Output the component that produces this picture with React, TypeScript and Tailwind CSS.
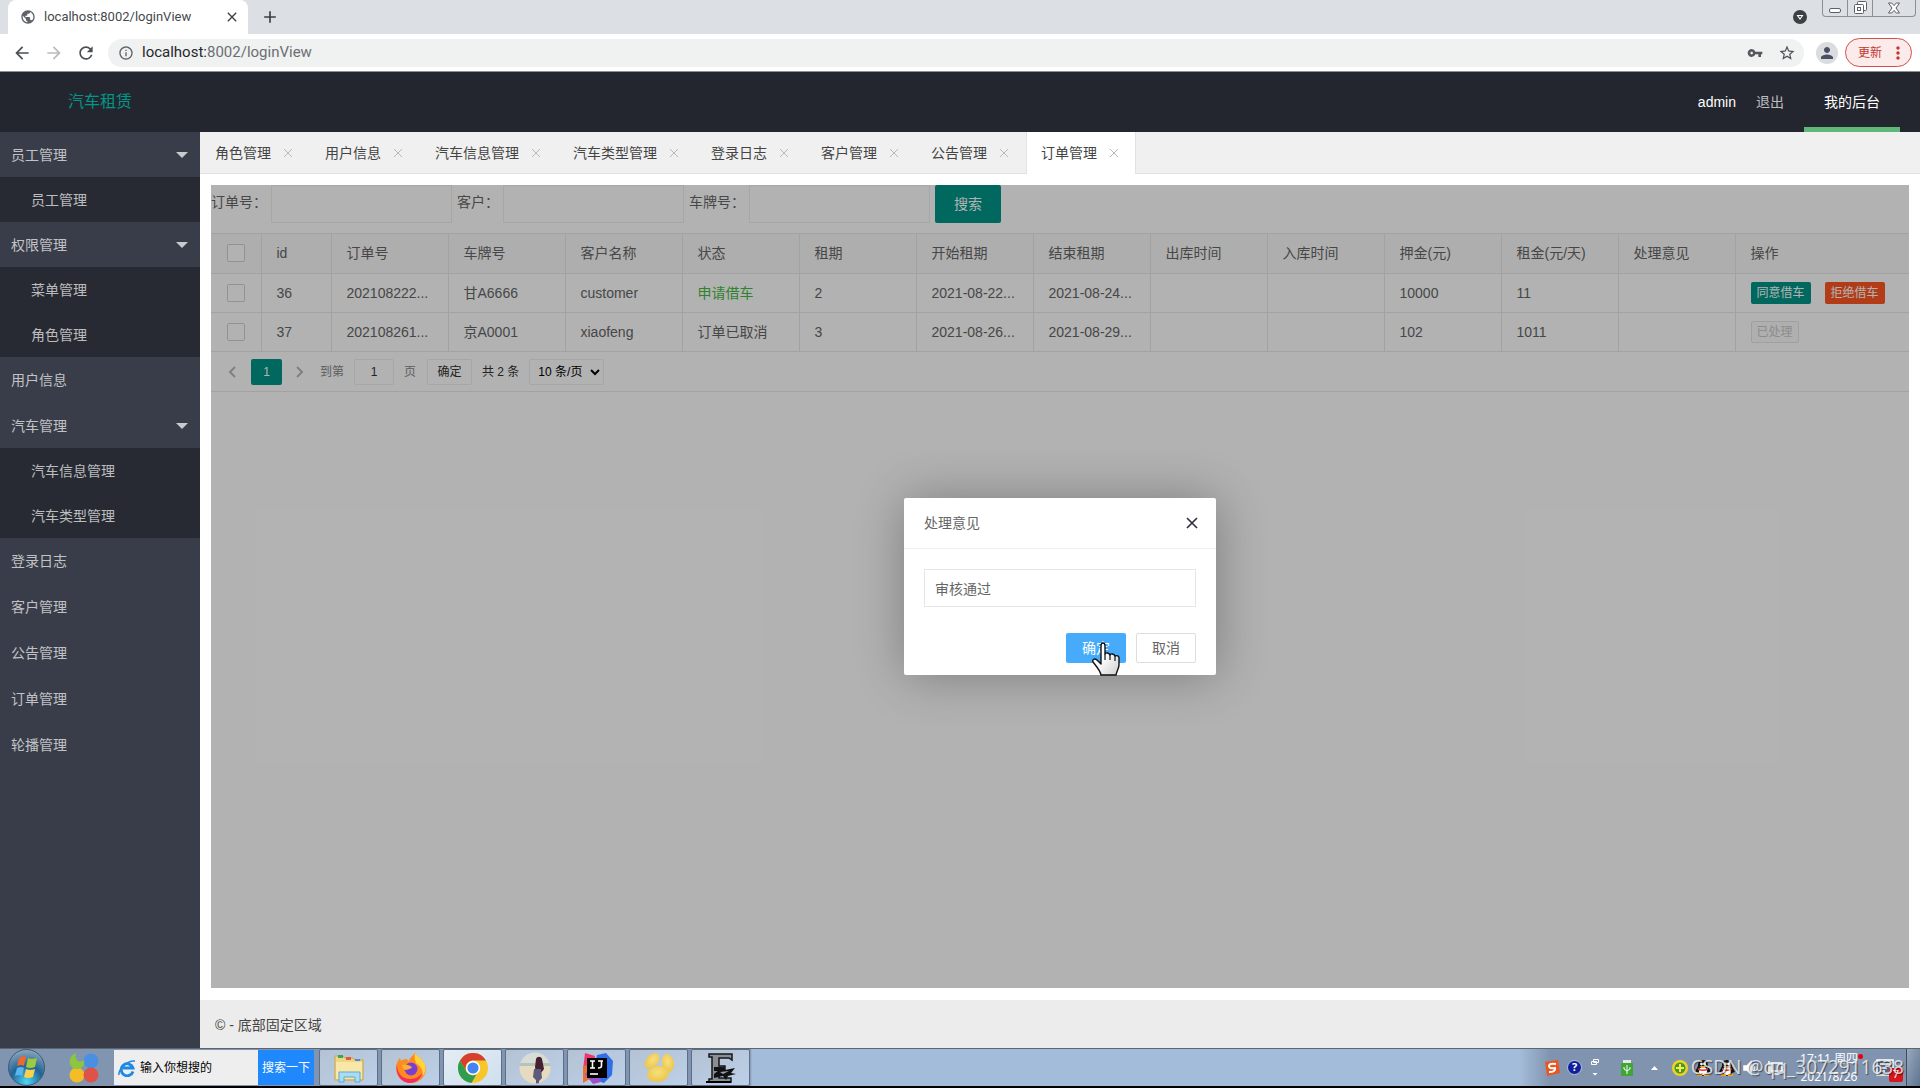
import React, { useState } from "react";
import {
  MdArrowBack,
  MdArrowForward,
  MdRefresh,
  MdInfoOutline,
  MdVpnKey,
  MdStarBorder,
  MdPerson,
  MdMoreVert,
  MdPublic,
  MdClose,
  MdAdd,
} from "react-icons/md";

const menu = [
  { label: "员工管理", children: ["员工管理"] },
  { label: "权限管理", children: ["菜单管理", "角色管理"] },
  { label: "用户信息" },
  { label: "汽车管理", children: ["汽车信息管理", "汽车类型管理"] },
  { label: "登录日志" },
  { label: "客户管理" },
  { label: "公告管理" },
  { label: "订单管理" },
  { label: "轮播管理" },
];

const tabs = [
  "角色管理",
  "用户信息",
  "汽车信息管理",
  "汽车类型管理",
  "登录日志",
  "客户管理",
  "公告管理",
  "订单管理",
];

const columns = [
  "id",
  "订单号",
  "车牌号",
  "客户名称",
  "状态",
  "租期",
  "开始租期",
  "结束租期",
  "出库时间",
  "入库时间",
  "押金(元)",
  "租金(元/天)",
  "处理意见",
  "操作",
];

const orders = [
  {
    id: "36",
    cells: ["202108222...", "甘A6666", "customer", "申请借车", "2", "2021-08-22...", "2021-08-24...", "", "", "10000", "11", ""],
    pending: true,
  },
  {
    id: "37",
    cells: ["202108261...", "京A0001", "xiaofeng", "订单已取消", "3", "2021-08-26...", "2021-08-29...", "", "", "102", "1011", ""],
    pending: false,
  },
];

const filters = [
  { id: "orderNo", label: "订单号：", width: "w-[60px]" },
  { id: "customer", label: "客户：", width: "w-[46px]" },
  { id: "plate", label: "车牌号：", width: "w-[60px]" },
];

const checkbox =
  "block w-[18px] h-[18px] appearance-none rounded-xs border border-[#d2d2d2] bg-white";

const BrowserBar = () => (
  <div className="font-['Noto_Sans','Noto_Sans_CJK_SC',sans-serif]">
    <div className="flex h-[34px] bg-[#dcdfe4] pl-2">
      <div className="flex w-[240px] items-center rounded-t-lg bg-white pl-3 pr-2">
        <MdPublic className="h-4 w-4 text-[#5f6368]" />
        <span className="ml-2 flex-1 font-['Roboto',sans-serif] text-[13px] text-[#45494d]">
          localhost:8002/loginView
        </span>
        <button aria-label="关闭标签页">
          <MdClose className="h-4 w-4 text-[#3c4043]" />
        </button>
      </div>
      <button aria-label="新标签页" className="ml-3">
        <MdAdd className="h-5 w-5 text-[#3c4043]" />
      </button>
      <div className="ml-auto flex items-start">
        <svg className="mt-[10px] mr-[15px] h-[14px] w-[14px]" viewBox="0 0 14 14">
          <circle cx="7" cy="7" r="7" fill="#3c4043" />
          <path d="M3.5 5h7L7 10z" fill="#fff" />
          <path d="M5.5 6h3L7 8z" fill="#3c4043" />
        </svg>
        <div className="mr-1 flex h-[17px] rounded-b border border-t-0 border-[#8b8f96] text-[#5b5f68]">
          <button aria-label="最小化" className="flex w-[25px] items-center justify-center border-r border-[#8b8f96]">
            <svg className="h-[14px] w-[14px]" viewBox="0 0 14 14" fill="#fff" stroke="currentColor">
              <rect x="1.5" y="7.5" width="11" height="4" rx="1.5" />
            </svg>
          </button>
          <button aria-label="还原" className="flex w-[25px] items-center justify-center border-r border-[#8b8f96]">
            <svg className="h-[14px] w-[14px]" viewBox="0 0 14 14" fill="#fff" stroke="currentColor">
              <rect x="4.5" y="0.5" width="9" height="9" rx="1" />
              <rect x="1.5" y="3.5" width="9" height="9" rx="1" />
              <rect x="4.5" y="6.5" width="3" height="3" />
            </svg>
          </button>
          <button aria-label="关闭" className="flex w-[42px] items-center justify-center">
            <svg className="h-[14px] w-[14px]" viewBox="0 0 14 14" fill="#fff" stroke="currentColor">
              <path d="M1.5 2h3.2L7 4.6 9.3 2h3.2L9 7l3.5 5H9.3L7 9.4 4.7 12H1.5L5 7z" />
            </svg>
          </button>
        </div>
      </div>
    </div>

    <div className="flex h-[38px] items-center border-b border-[#8c9093] bg-white pl-3 pr-2">
      <button aria-label="后退">
        <MdArrowBack className="h-5 w-5 text-[#4b4f53]" />
      </button>
      <button aria-label="前进" className="ml-3">
        <MdArrowForward className="h-5 w-5 text-[#b9bbbe]" />
      </button>
      <button aria-label="重新加载" className="ml-3">
        <MdRefresh className="h-5 w-5 text-[#4b4f53]" />
      </button>
      <div className="ml-3 flex h-7 flex-1 items-center rounded-full bg-[#f0f1f1] pl-[10px] pr-2">
        <MdInfoOutline className="h-4 w-4 text-[#5f6368]" />
        <span className="ml-2 font-['Roboto',sans-serif] text-[15px] text-[#6b6f73]">
          <span className="text-[#26282b]">localhost:</span>8002/loginView
        </span>
        <MdVpnKey className="ml-auto h-4 w-4 text-[#55595d]" />
        <MdStarBorder className="ml-[15px] h-[18px] w-[18px] text-[#4b4f53]" />
      </div>
      <div className="ml-3 flex h-[22px] w-[22px] items-center justify-center rounded-full bg-[#dadce0]">
        <MdPerson className="h-[18px] w-[18px] text-[#4a5062]" />
      </div>
      <button className="ml-[7px] flex h-[29px] w-[67px] items-center rounded-full border border-[#d0504a] bg-[#fbeceb] pl-3 text-xs text-[#c5352d]">
        更新
        <MdMoreVert className="ml-[6px] h-5 w-5" />
      </button>
    </div>
  </div>
);

const Sidebar = () => (
  <nav className="w-[200px] shrink-0 bg-[#393d49] text-white/70">
    {menu.map((item) => (
      <div key={item.label}>
        <a
          href="#"
          className={`flex items-center justify-between pl-[11px] pr-3 ${
            item.children ? "h-[45px]" : "h-[46px]"
          }`}
        >
          {item.label}
          {item.children && (
            <svg className="h-[6px] w-3" viewBox="0 0 12 6" fill="#c9cacc">
              <path d="M0 0h12L6 6z" />
            </svg>
          )}
        </a>
        {item.children && (
          <div className="bg-[#272a32]">
            {item.children.map((child) => (
              <a key={child} href="#" className="flex h-[45px] items-center pl-[31px]">
                {child}
              </a>
            ))}
          </div>
        )}
      </div>
    ))}
  </nav>
);

const OrderTable = () => (
  <div className="border-b border-t border-[#e8e8e8]">
    <table className="w-full table-fixed border-collapse text-left">
      <colgroup>
        <col className="w-[50px]" />
        <col className="w-[70px]" />
        {columns.slice(1, -1).map((c) => (
          <col key={c} className="w-[117px]" />
        ))}
        <col />
      </colgroup>
      <thead className="bg-[#fafafa]">
        <tr className="h-[39px] border-b border-[#e8e8e8]">
          <th className="border-r border-[#e8e8e8] pl-4">
            <input type="checkbox" aria-label="全选" className={checkbox} />
          </th>
          {columns.map((c) => (
            <th key={c} className="truncate border-r border-[#e8e8e8] px-[15px] font-normal last:border-r-0">
              {c}
            </th>
          ))}
        </tr>
      </thead>
      <tbody>
        {orders.map((order) => (
          <tr key={order.id} className="h-[39px] border-b border-[#e8e8e8]">
            <td className="border-r border-[#e8e8e8] pl-4">
              <input type="checkbox" aria-label={order.id} className={checkbox} />
            </td>
            <td className="border-r border-[#e8e8e8] px-[15px]">{order.id}</td>
            {order.cells.map((cell, i) => (
              <td
                key={i}
                className={`whitespace-nowrap border-r border-[#e8e8e8] px-[15px] ${
                  cell === "申请借车" ? "text-[#45b93f]" : ""
                }`}
              >
                {cell}
              </td>
            ))}
            <td className="px-[15px]">
              {order.pending ? (
                <div className="flex gap-[14px]">
                  <button className="h-[22px] w-[60px] rounded-xs bg-[#009688] text-xs text-white">
                    同意借车
                  </button>
                  <button className="h-[22px] w-[60px] rounded-xs bg-[#ff5722] text-xs text-white">
                    拒绝借车
                  </button>
                </div>
              ) : (
                <button disabled className="block h-[22px] w-12 rounded-xs border border-[#e6e6e6] bg-[#fbfbfb] text-xs text-[#c9c9c9]">
                  已处理
                </button>
              )}
            </td>
          </tr>
        ))}
      </tbody>
    </table>

    <div className="flex h-[39px] items-center pl-3 pt-px text-xs text-[#333333]">
      <button aria-label="上一页" className="mr-[10px] flex w-[18px] justify-center">
        <svg className="h-3 w-2" viewBox="0 0 8 12" fill="none" stroke="#b8b8b8" strokeWidth="2">
          <path d="M7 1L2 6l5 5" />
        </svg>
      </button>
      <button className="h-[26px] w-[31px] rounded-xs bg-[#009688] text-white">1</button>
      <button aria-label="下一页" className="flex w-9 justify-center">
        <svg className="h-3 w-2" viewBox="0 0 8 12" fill="none" stroke="#b8b8b8" strokeWidth="2">
          <path d="M1 1l5 5-5 5" />
        </svg>
      </button>
      <label htmlFor="page" className="ml-[2px] w-[34px] text-[#888888]">到第</label>
      <input
        id="page"
        defaultValue="1"
        className="h-[26px] w-10 rounded-xs border border-[#eeeeee] bg-white text-center"
      />
      <span className="ml-[10px] text-[#888888]">页</span>
      <button className="ml-[11px] h-[26px] w-[45px] rounded-xs border border-[#eeeeee]">
        确定
      </button>
      <span className="ml-[10px]">共 2 条</span>
      <select
        aria-label="每页条数"
        className="ml-[10px] h-[26px] w-[75px] rounded-xs border border-[#eeeeee] bg-white pl-1 text-black"
      >
        <option>10 条/页</option>
      </select>
    </div>
  </div>
);

const Cursor = () => (
  <svg className="pointer-events-none absolute left-[26px] top-[9px] h-[34px] w-7" viewBox="0 0 28 34">
    <defs>
      <linearGradient id="glove" x1="0" y1="0" x2="1" y2="1">
        <stop offset="0.4" stopColor="#fff" />
        <stop offset="1" stopColor="#cfcfcf" />
      </linearGradient>
    </defs>
    <path
      d="M9 4c0-4 4-4 4 0v8c1-2 4-1 5 1 1-2 4-1 5 1 2-1 4 0 4 2v7c0 3-2 5-3 10H9C8 28 4 24 1 20c-1-3 2-4 4-2l4 4z"
      fill="url(#glove)"
      stroke="#111"
      strokeWidth="1.4"
      strokeLinejoin="round"
    />
    <path d="M13 12v6M18 13v5M23 14v5" stroke="#111" strokeWidth="1.2" fill="none" />
  </svg>
);

const OpinionDialog = () => {
  const [opinion, setOpinion] = useState("审核通过");

  return (
    <div className="absolute inset-0 flex items-center justify-center bg-black/30">
      <div
        role="dialog"
        aria-label="处理意见"
        className="w-[312px] rounded-xs bg-white shadow-[1px_1px_50px_rgba(0,0,0,0.3)]"
      >
        <div className="flex h-[51px] items-center justify-between border-b border-[#eeeeee] pl-5 pr-[17px]">
          <h2>处理意见</h2>
          <button aria-label="关闭">
            <svg className="h-[14px] w-[14px]" viewBox="0 0 14 14" stroke="#2e2d3c" strokeWidth="1.6">
              <path d="M2 2l10 10M12 2L2 12" />
            </svg>
          </button>
        </div>
        <div className="px-5 pt-5">
          <input
            aria-label="处理意见"
            value={opinion}
            onChange={(e) => setOpinion(e.target.value)}
            className="block h-[38px] w-full border border-[#e6e6e6] px-[10px] outline-none"
          />
        </div>
        <div className="flex justify-end gap-[10px] px-5 pb-3 pt-[26px]">
          <div className="relative">
            <button className="block h-[30px] w-[60px] rounded-xs bg-[#45abfa] text-white">
              确定
            </button>
            <Cursor />
          </div>
          <button className="h-[30px] w-[60px] rounded-xs border border-[#dedede]">取消</button>
        </div>
      </div>
    </div>
  );
};

const FolderIcon = () => (
  <svg className="h-8 w-8" viewBox="0 0 32 32">
    <path d="M2 4h8l2 2h8l2 2h8v20H2z" fill="#efd686" stroke="#c9a74a" />
    <path d="M3 10h26v17H3z" fill="#f8e7a6" />
    <path d="M5 3h5v3H5z" fill="#35a853" />
    <path d="M13 5h5v3h-5z" fill="#e3573c" />
    <path d="M22 7h5v2h-5z" fill="#4a90d9" />
    <path d="M6 30V20h21v10h-5v-5H11v5z" fill="#a9dcf2" stroke="#5ba9d0" />
  </svg>
);

const FirefoxIcon = () => (
  <svg className="h-8 w-8" viewBox="0 0 32 32">
    <path d="M20 1c1 3 8 6 10 12 3 9-4 18-14 18C7 31 1 24 1 16c0-4 2-8 4-10l1 3c1-1 3-2 5-2 2 0 1 2 3 2 0-3 4-5 6-8z" fill="#ff8a1f" />
    <path d="M20 1c1 3 8 6 10 12 1 4 0 8-2 11 0-7-3-10-7-13-1-3-2-6-1-10z" fill="#ffd43a" />
    <path d="M2 12c0 10 6 15 13 15 6 0 10-3 12-6-1 6-6 10-12 10C6 31 0 22 2 12z" fill="#f2305a" />
    <circle cx="16" cy="17" r="6.5" fill="#7a3fd0" />
    <path d="M7 13c4-1 7 0 10 2-1 2-4 2-6 3-2 0-4-2-4-5z" fill="#ffb02e" />
  </svg>
);

const ChromeIcon = () => (
  <svg className="h-[30px] w-[30px]" viewBox="0 0 30 30">
    <circle cx="15" cy="15" r="15" fill="#f6c62d" />
    <path d="M2 7.5A15 15 0 0 1 28 7.5H15a7.5 7.5 0 0 0-6.5 11.2z" fill="#d5402f" />
    <path d="M2 7.5l6.5 11.2a7.5 7.5 0 0 0 10 2.5L13.5 30A15 15 0 0 1 2 7.5z" fill="#2d9d50" />
    <circle cx="15" cy="15" r="7.2" fill="#fff" />
    <circle cx="15" cy="15" r="5.6" fill="#4484ee" />
  </svg>
);

const PhotoIcon = () => (
  <svg className="h-8 w-8" viewBox="0 0 32 32">
    <defs>
      <clipPath id="round">
        <circle cx="16" cy="16" r="15.5" />
      </clipPath>
    </defs>
    <g clipPath="url(#round)">
      <path d="M0 0h32v12H0z" fill="#d8dcd6" />
      <path d="M0 11h32v3H0z" fill="#b3c4bd" />
      <path d="M0 14h32v18H0z" fill="#e6dac0" />
      <path d="M17 7c1-3 5-3 6 0l2 10-3 4h-5l-1-6z" fill="#45202e" />
      <path d="M15 17h7l1 9-3 3v3h-3v-4l-3-3z" fill="#5b5a78" />
    </g>
  </svg>
);

const IdeaIcon = () => (
  <svg className="h-8 w-8" viewBox="0 0 32 32">
    <path d="M4 1l10 3-2 12L2 18z" fill="#f0356f" />
    <path d="M2 14l10-2 2 12-12 7z" fill="#e8713a" />
    <path d="M16 3l9-2 7 8-1 14-8 8-12-4z" fill="#2f6fe8" />
    <path d="M4 22l12-10 4 18-8 2z" fill="#9b52c8" />
    <rect x="6" y="6" width="20" height="20" fill="#000" />
    <path d="M9 9h5M11.5 9v7M9 16h5M17 9h5M20.5 9v5q0 2-3.5 2" stroke="#fff" strokeWidth="1.6" fill="none" />
    <path d="M9 22h8" stroke="#fff" strokeWidth="1.6" />
  </svg>
);

const NavicatIcon = () => (
  <svg className="h-8 w-8" viewBox="0 0 32 32">
    <defs>
      <radialGradient id="bean" cx="50%" cy="40%" r="70%">
        <stop offset="0" stopColor="#f8e07a" />
        <stop offset="1" stopColor="#e8c048" />
      </radialGradient>
    </defs>
    <g fill="url(#bean)">
      <ellipse cx="9" cy="9" rx="6" ry="9" transform="rotate(40 9 9)" />
      <ellipse cx="25" cy="11" rx="6" ry="9" transform="rotate(-12 25 11)" />
      <ellipse cx="15" cy="22" rx="11" ry="8" transform="rotate(-8 15 22)" />
    </g>
  </svg>
);

const RecorderIcon = () => (
  <svg className="h-8 w-8" viewBox="0 0 32 32">
    <path d="M4 2h23v6l-3-2H14v8h6v4h-6v8h12v4H4v-3h3V5H4z" fill="#8a8f95" stroke="#15171a" strokeWidth="1.5" />
    <path d="M9 15h8v4H9zM9 22l10-8 1 4 10-2-4 5 5 1-8 2-2 4-3-4-9 2z" fill="#101214" />
    <path d="M15 20l9-1-6 3z" fill="#9da2a8" />
    <path d="M1 30h25" stroke="#000" strokeWidth="2" />
  </svg>
);

const taskbarApps = [
  { name: "资源管理器", icon: <FolderIcon /> },
  { name: "Firefox", icon: <FirefoxIcon /> },
  { name: "Chrome", icon: <ChromeIcon /> },
  { name: "照片", icon: <PhotoIcon /> },
  { name: "IntelliJ IDEA", icon: <IdeaIcon /> },
  { name: "Navicat", icon: <NavicatIcon /> },
  { name: "录屏", icon: <RecorderIcon /> },
];

const Penguin = () => (
  <svg className="h-4 w-4" viewBox="0 0 16 16">
    <path d="M8 0c4 0 5 3 5 6l3 6-3 1-5 3-5-3-3-1 3-6c0-3 1-6 5-6z" fill="#111" />
    <ellipse cx="8" cy="11" rx="4" ry="4" fill="#fff" />
    <circle cx="6.5" cy="4" r="1.4" fill="#fff" />
    <circle cx="9.5" cy="4" r="1.4" fill="#fff" />
    <path d="M4 6h8l-4 2z" fill="#f5a623" />
    <path d="M3 8q5 3 10 0v2q-5 2-10 0z" fill="#e3342f" />
    <path d="M2 14h5v2H2zM9 14h5v2H9z" fill="#f5a623" />
  </svg>
);

const Taskbar = () => (
  <div className="relative flex h-10 border-b-2 border-t border-b-black border-t-[#5b6673] bg-[linear-gradient(to_right,#8295b0_0,#8295b0_750px,#a3bcd9_752px,#a3bcd9_calc(100%-400px),#8194af_calc(100%-370px),#8194af_100%)] font-['Noto_Sans','Noto_Sans_CJK_SC',sans-serif]">
    <div className="flex w-[114px] items-center pl-2">
      <svg className="h-[37px] w-[37px]" viewBox="0 0 37 37">
        <defs>
          <radialGradient id="orb" cx="50%" cy="90%" r="90%">
            <stop offset="0" stopColor="#4fd8f5" />
            <stop offset="0.5" stopColor="#1f6396" />
            <stop offset="1" stopColor="#8fa9bd" />
          </radialGradient>
        </defs>
        <circle cx="18.5" cy="18.5" r="18" fill="url(#orb)" stroke="#3e5873" />
        <path d="M11 9q4-3 7-1l-2 9q-3-2-7 0z" fill="#f0672e" />
        <path d="M20 9q4 2 9 0l-2 9q-5 2-9 0z" fill="#9ccb3c" />
        <path d="M9 19q4-2 7 0l-2 8q-3-2-7 0z" fill="#5bb5ee" />
        <path d="M18 20q4 2 9 0l-2 8q-5 2-9 0z" fill="#fcd048" />
      </svg>
      <svg className="ml-6 h-[30px] w-[30px]" viewBox="0 0 30 30">
        <circle cx="22" cy="8" r="7.5" fill="#4a90e2" />
        <circle cx="8" cy="22" r="7.5" fill="#f4bd27" />
        <circle cx="22" cy="22" r="7.5" fill="#df5248" />
        <path d="M7 0C-2 3-1 16 8 16c6 0 9-6 6-9-3 4-9 0-7-7z" fill="#8cc63f" />
      </svg>
    </div>

    <div className="flex py-px">
      <div className="flex w-36 items-center bg-[#eeeeee] pl-1">
        <svg className="h-[18px] w-[18px]" viewBox="0 0 18 18" fill="none" stroke="#1e88e5">
          <path d="M15 12.5A6 6 0 1 1 15 9H5" strokeWidth="2.8" />
          <path d="M1 16C0 11 9 1 17 2" strokeWidth="1.5" />
        </svg>
        <input
          aria-label="搜索"
          defaultValue="输入你想搜的"
          className="ml-1 w-[110px] text-xs text-black outline-none"
        />
      </div>
      <button className="w-14 bg-[#1e88fc] text-xs text-white">搜索一下</button>
    </div>

    <div className="ml-[5px] flex gap-[3px]">
      {taskbarApps.map((app) => (
        <button
          key={app.name}
          aria-label={app.name}
          className={`flex w-[59px] items-center justify-center rounded-xs border border-[#5d6f88] ${
            app.name === "Chrome"
              ? "bg-linear-to-br from-[#e4edf5] to-[#cfdfec]"
              : "bg-linear-to-br from-[#b4c2d3] to-[#bcd0e8]"
          }`}
        >
          {app.icon}
        </button>
      ))}
    </div>

    <div className="ml-auto flex items-center text-xs text-white">
      <svg className="h-4 w-4" viewBox="0 0 16 16">
        <path d="M1 2l13-2 2 13-13 3z" fill="#ea5520" />
        <path d="M12 4Q5 3 5 6t6 2q1 4-6 4" stroke="#fff" strokeWidth="2" fill="none" />
      </svg>
      <span className="ml-[7px] flex h-[15px] w-[15px] items-center justify-center rounded-full border border-[#b9c3e4] bg-[#10209a] text-[11px] font-bold">
        ?
      </span>
      <svg className="ml-[9px] h-5 w-2" viewBox="0 0 8 20" fill="none" stroke="#fff">
        <path d="M2.5 1.500h5v3h-5zM.5 3.500h5v3h-5z" />
        <path d="M1.5 15h5L4 17.500z" fill="#fff" stroke="none" />
      </svg>
      <svg className="ml-[22px] h-4 w-3" viewBox="0 0 12 16">
        <rect x="2" y="0" width="8" height="4" fill="#e7e7e7" />
        <rect y="3" width="12" height="13" rx="1" fill="#3fa535" />
        <path d="M6 5v9M3 7v2l3 2 3-2V7" stroke="#fff" fill="none" />
      </svg>
      <svg className="ml-[18px] h-1 w-[7px]" viewBox="0 0 7 4" fill="#fff">
        <path d="M0 4h7L3.5 0z" />
      </svg>
      <svg className="ml-[14px] h-4 w-4" viewBox="0 0 16 16">
        <circle cx="8" cy="8" r="8" fill="#f2d21f" />
        <circle cx="8" cy="8" r="5.5" fill="#3f9c35" />
        <path d="M8 4v8M4 8h8" stroke="#ffe94a" strokeWidth="2" />
      </svg>
      <div className="ml-[7px] flex gap-2">
        <Penguin />
        <Penguin />
      </div>
      <svg className="ml-2 h-4 w-4" viewBox="0 0 16 16" fill="none" stroke="#fff" strokeWidth="1.5">
        <path d="M1 6h3l4-4v12l-4-4H1zM10 5q3 3 0 6" fill="#fff" />
      </svg>
      <svg className="ml-2 h-4 w-4" viewBox="0 0 16 16" fill="none" stroke="#fff" strokeWidth="1.5">
        <path d="M4 3h11v8H4zM7 14h6M2 1v13" />
      </svg>
      <div className="relative ml-4 w-[60px] text-center leading-[18px]">
        <div>17:11 周四</div>
        <div>2021/8/26</div>
        <span className="absolute -right-1 top-1 h-[5px] w-[5px] rounded-full bg-red-600" />
      </div>
      <div className="relative ml-4 mr-[11px]">
        <svg className="h-5 w-5" viewBox="0 0 20 20" fill="#5c6a80" stroke="#fff" strokeWidth="1.5">
          <path d="M2 2h16v15H2zM5 6h10M5 10h7M5 13h5" />
        </svg>
        <span className="absolute -bottom-1 -right-2 flex h-[14px] w-[14px] items-center justify-center rounded-xs bg-[#d8141c] text-[11px]">
          7
        </span>
      </div>
      <div className="h-full w-[14px] border-l border-[#3f4d61] bg-linear-to-br from-[#9aa9bd] to-[#5d7490]" />
    </div>

    <div className="absolute right-4 top-1 font-['Noto_Sans',sans-serif] text-[19px] leading-7 text-white/75 [text-shadow:1px_1px_1px_rgba(0,0,0,0.5)]">
      CSDN @qq_3072911638
    </div>
  </div>
);

const App = () => {
  const [activeTab, setActiveTab] = useState("订单管理");

  return (
    <div className="flex min-h-screen flex-col bg-white font-['Liberation_Sans','Noto_Sans_CJK_SC',sans-serif] text-sm text-[#666666]">
      <BrowserBar />

      <header className="flex h-[60px] bg-[#23262e] text-white">
        <div className="flex w-[200px] items-center justify-center text-base text-[#009688]">
          汽车租赁
        </div>
        <div className="ml-auto mr-5 flex items-center">
          <span>admin</span>
          <a href="#" className="ml-5 text-white/70">退出</a>
          <a
            href="#"
            className="ml-5 flex h-full w-24 items-center justify-center border-b-[5px] border-[#5fb878] pt-[5px]"
          >
            我的后台
          </a>
        </div>
      </header>

      <div className="flex flex-1">
        <Sidebar />

        <div className="flex min-w-0 flex-1 flex-col">
          <div className="flex h-[42px] border-b border-[#e2e2e2] bg-[#f0f0f0] text-[#444444]">
            {tabs.map((tab) => (
              <div
                key={tab}
                className={`flex items-center border-x pl-[14px] pr-4 ${
                  activeTab === tab ? "-mb-px border-[#e2e2e2] bg-white" : "border-transparent"
                }`}
              >
                <button onClick={() => setActiveTab(tab)}>{tab}</button>
                <button aria-label={`关闭${tab}`} className="ml-3">
                  <svg className="h-[10px] w-[10px]" viewBox="0 0 10 10" stroke="#b9b9b9">
                    <path d="M1 1l8 8M9 1L1 9" />
                  </svg>
                </button>
              </div>
            ))}
          </div>

          <main className="relative mx-[11px] mb-3 mt-[11px] flex-1">
            <form className="flex h-[38px]" onSubmit={(e) => e.preventDefault()}>
              {filters.map((f) => (
                <React.Fragment key={f.id}>
                  <label htmlFor={f.id} className={`shrink-0 whitespace-nowrap pt-[7px] ${f.width}`}>
                    {f.label}
                  </label>
                  <input
                    id={f.id}
                    className="mr-[5px] h-full w-[181px] border border-[#f0f0f0] bg-white px-[10px]"
                  />
                </React.Fragment>
              ))}
              <button className="w-[66px] rounded-xs bg-[#009688] text-white">搜索</button>
            </form>
            <div className="mt-[10px]">
              <OrderTable />
            </div>
            <OpinionDialog />
          </main>

          <footer className="flex h-12 items-center bg-[#ececec] pl-[15px] pt-[2px] text-[#444444]">
            © - 底部固定区域
          </footer>
        </div>
      </div>

      <Taskbar />
    </div>
  );
};

export default App;
